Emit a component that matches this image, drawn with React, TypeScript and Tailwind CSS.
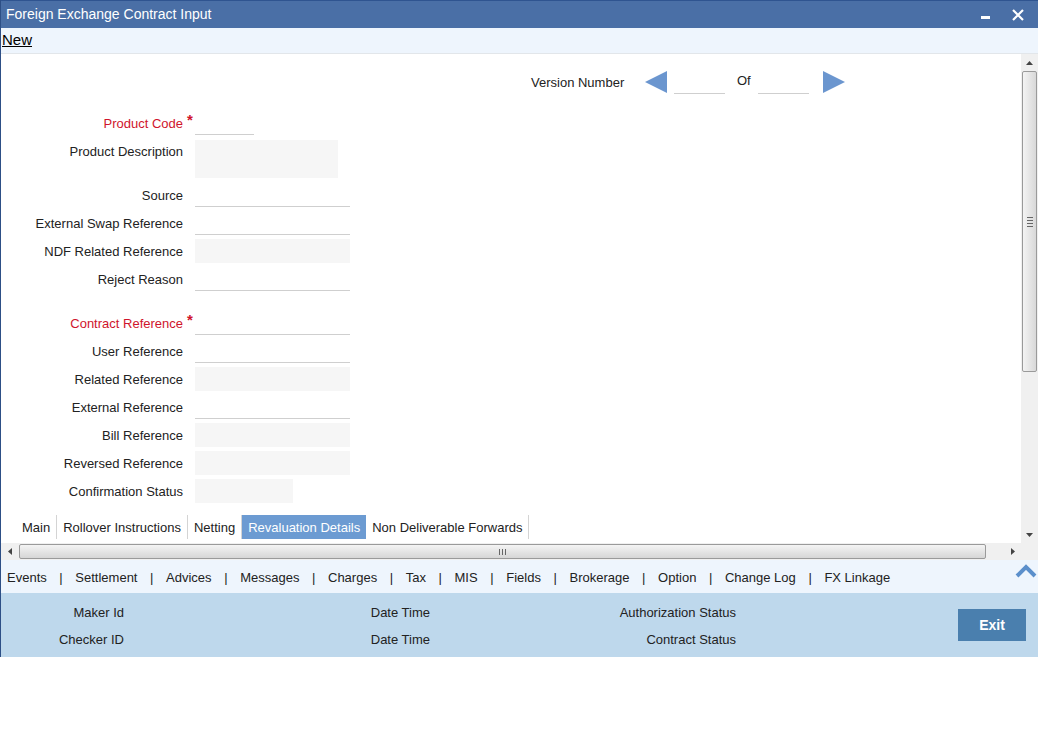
import React from 'react';

type Field = { label: string; kind: 'line' | 'grey'; width?: string; required?: boolean };

const topFields: Field[] = [
  { label: 'Source', kind: 'line' },
  { label: 'External Swap Reference', kind: 'line' },
  { label: 'NDF Related Reference', kind: 'grey' },
  { label: 'Reject Reason', kind: 'line' },
];

const refFields: Field[] = [
  { label: 'Contract Reference', kind: 'line', required: true },
  { label: 'User Reference', kind: 'line' },
  { label: 'Related Reference', kind: 'grey' },
  { label: 'External Reference', kind: 'line' },
  { label: 'Bill Reference', kind: 'grey' },
  { label: 'Reversed Reference', kind: 'grey' },
  { label: 'Confirmation Status', kind: 'grey', width: 'w-[98px]' },
];

const tabs = ['Main', 'Rollover Instructions', 'Netting', 'Revaluation Details', 'Non Deliverable Forwards'];
const links = ['Events', 'Settlement', 'Advices', 'Messages', 'Charges', 'Tax', 'MIS', 'Fields', 'Brokerage', 'Option', 'Change Log', 'FX Linkage'];

function FormRow({ field }: { field: Field }) {
  return (
    <div className="flex h-[28px] items-start">
      <div className={`relative w-[182px] pt-[7px] text-right leading-[16px] ${field.required ? 'text-[#d0142c]' : 'text-[#222]'}`}>
        {field.label}
        {field.required && <span className="absolute left-[186px] top-[3px] text-[15px] font-bold text-[#d0142c]">*</span>}
      </div>
      <div
        className={`ml-[12px] mt-[2px] h-[24px] ${field.width ?? 'w-[155px]'} ${
          field.kind === 'grey' ? 'bg-[#f6f6f6]' : 'border-b border-[#cfcfcf]'
        }`}
      />
    </div>
  );
}

function Triangle({ dir }: { dir: 'left' | 'right' }) {
  return (
    <svg width="22" height="22" viewBox="0 0 22 22">
      {dir === 'left' ? <polygon points="0,11 22,0 22,22" fill="#6b96cf" /> : <polygon points="22,11 0,0 0,22" fill="#6b96cf" />}
    </svg>
  );
}

function Arrow({ dir }: { dir: 'up' | 'down' | 'left' | 'right' }) {
  const pts = {
    up: '0,4 3.5,0 7,4',
    down: '0,0 3.5,4 7,0',
    left: '4,0 0,3.5 4,7',
    right: '0,0 4,3.5 0,7',
  }[dir];
  const w = dir === 'up' || dir === 'down' ? 7 : 4;
  const h = dir === 'up' || dir === 'down' ? 4 : 7;
  return (
    <svg width={w} height={h} viewBox={`0 0 ${w} ${h}`}>
      <polygon points={pts} fill="#444" />
    </svg>
  );
}

export default function App() {
  return (
    <div className="h-[742px] w-[1038px] bg-white font-['Liberation_Sans',Arial,sans-serif] text-[13px] text-[#222]">
      <div className="flex flex-col border-l border-[#2d4f86]">
        {/* Title bar */}
        <div className="flex h-[28px] items-center justify-between border-t border-[#2f5490] bg-[#4a6fa6] pl-[5px] pr-[14px] text-white">
          <span className="text-[14px]">Foreign Exchange Contract Input</span>
          <div className="flex items-center gap-[22px]">
            <span className="mt-[6px] block h-[3px] w-[9px] bg-white" />
            <svg width="12" height="12" viewBox="0 0 12 12">
              <path d="M1 1 L11 11 M11 1 L1 11" stroke="white" strokeWidth="2.2" />
            </svg>
          </div>
        </div>

        {/* Toolbar */}
        <div className="flex h-[26px] items-center border-b border-[#e2e6ea] bg-[#eef5fd] pl-[1px]">
          <span className="text-[15px] text-black underline">New</span>
        </div>

        {/* Content area */}
        <div className="flex h-[489px]">
          <div className="flex flex-1 flex-col">
            <div className="mt-[16px] flex h-[24px] items-center pl-[530px]">
              <span className="w-[114px] pt-[1px]">Version Number</span>
              <Triangle dir="left" />
              <div className="ml-[7px] h-[24px] w-[51px] self-start border-b border-[#cfcfcf]" />
              <span className="ml-[12px] mr-[7px] -mt-[3px]">Of</span>
              <div className="h-[24px] w-[51px] self-start border-b border-[#cfcfcf]" />
              <span className="ml-[14px]">
                <Triangle dir="right" />
              </span>
            </div>

            <div className="mt-[15px] flex flex-col">
              <FormRow field={{ label: 'Product Code', kind: 'line', width: 'w-[59px]', required: true }} />
              <div className="flex h-[44px] items-start">
                <div className="w-[182px] pt-[7px] text-right leading-[16px]">Product Description</div>
                <div className="ml-[12px] mt-[3px] h-[38px] w-[143px] bg-[#f6f6f6]" />
              </div>
              {topFields.map(f => (
                <FormRow key={f.label} field={f} />
              ))}
              <div className="h-[16px]" />
              {refFields.map(f => (
                <FormRow key={f.label} field={f} />
              ))}
            </div>

            {/* Tabs */}
            <div className="mt-[10px] flex h-[24px] items-stretch pl-[15px]">
              {tabs.map(t => (
                <div
                  key={t}
                  className={`flex items-center px-[6px] pt-[2px] ${
                    t === 'Revaluation Details' ? 'bg-[#6c9bd2] text-white' : 'border-r border-[#d4d4d4]'
                  }`}
                >
                  {t}
                </div>
              ))}
            </div>
          </div>

          {/* Vertical scrollbar */}
          <div className="flex w-[17px] flex-col items-center bg-[#f0f0f0]">
            <div className="flex h-[17px] items-center justify-center">
              <Arrow dir="up" />
            </div>
            <div className="flex h-[301px] w-[15px] items-center justify-center rounded-[2px] border border-[#9a9a9a] bg-gradient-to-r from-[#f4f4f4] to-[#d8d8d8]">
              <div className="flex flex-col gap-[2px]">
                <span className="block h-[1px] w-[6px] bg-[#666]" />
                <span className="block h-[1px] w-[6px] bg-[#666]" />
                <span className="block h-[1px] w-[6px] bg-[#666]" />
                <span className="block h-[1px] w-[6px] bg-[#666]" />
              </div>
            </div>
            <div className="flex-1" />
            <div className="flex h-[17px] items-center justify-center">
              <Arrow dir="down" />
            </div>
          </div>
        </div>

        {/* Horizontal scrollbar */}
        <div className="flex h-[17px] items-center bg-[#f0f0f0]">
          <div className="flex w-[17px] items-center justify-center">
            <Arrow dir="left" />
          </div>
          <div className="ml-[1px] flex h-[15px] w-[967px] items-center justify-center rounded-[2px] border border-[#9a9a9a] bg-gradient-to-b from-[#f4f4f4] to-[#d6d6d6]">
            <div className="flex gap-[2px]">
              <span className="block h-[6px] w-[1px] bg-[#666]" />
              <span className="block h-[6px] w-[1px] bg-[#666]" />
              <span className="block h-[6px] w-[1px] bg-[#666]" />
            </div>
          </div>
          <div className="flex-1" />
          <div className="flex w-[17px] items-center justify-center">
            <Arrow dir="right" />
          </div>
          <div className="h-[17px] w-[17px] bg-[#f0f0f0]" />
        </div>

        {/* Links bar */}
        <div className="flex h-[33px] items-center bg-[#eef5fd] pl-[6px] pr-[1px] pt-[2px]">
          {links.map((l, i) => (
            <React.Fragment key={l}>
              {i > 0 && <span className="px-[12.6px]">|</span>}
              <span>{l}</span>
            </React.Fragment>
          ))}
          <div className="flex-1" />
          <svg width="22" height="14" viewBox="0 0 22 14" className="-mt-[14px]">
            <path d="M2 12 L11 3 L20 12" fill="none" stroke="#5b8fcb" strokeWidth="4" />
          </svg>
        </div>

        {/* Footer */}
        <div className="flex h-[64px] items-center bg-[#bed8ec]">
          <div className="flex flex-col gap-[11px] pt-[2px]">
            <div className="flex leading-[16px]">
              <span className="w-[123px] text-right">Maker Id</span>
              <span className="w-[306px] text-right">Date Time</span>
              <span className="w-[306px] text-right">Authorization Status</span>
            </div>
            <div className="flex leading-[16px]">
              <span className="w-[123px] text-right">Checker ID</span>
              <span className="w-[306px] text-right">Date Time</span>
              <span className="w-[306px] text-right">Contract Status</span>
            </div>
          </div>
          <div className="ml-[222px] flex h-[32px] w-[68px] items-center justify-center bg-[#4a7fae] text-[14px] font-bold text-white">
            Exit
          </div>
        </div>
      </div>
    </div>
  );
}
